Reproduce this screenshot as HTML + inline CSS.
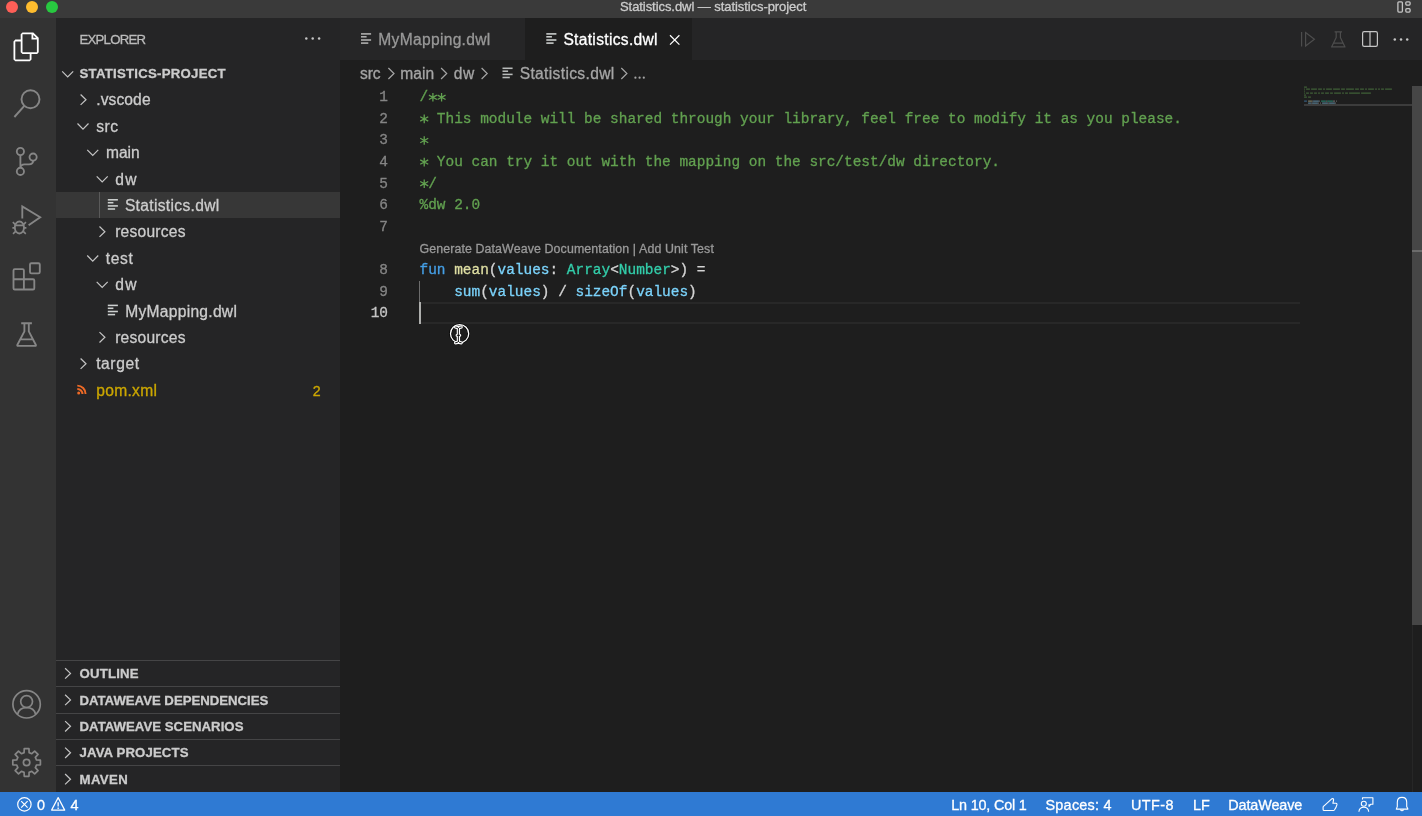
<!DOCTYPE html>
<html>
<head>
<meta charset="utf-8">
<title>Statistics.dwl — statistics-project</title>
<style>
*{box-sizing:border-box;margin:0;padding:0}
html,body{width:1422px;height:816px;overflow:hidden;background:#1e1e1e}
body{font-family:"Liberation Sans",sans-serif;position:relative;color:#ccc}
.abs{position:absolute}
.t{position:absolute;white-space:pre;line-height:1;-webkit-text-stroke:0.3px currentColor}
#titlebar{left:0;top:0;width:1422px;height:18px;background:#3a3a3a}
#activity{left:0;top:18px;width:56px;height:774px;background:#333333}
#sidebar{left:56px;top:18px;width:284px;height:774px;background:#252526}
#tabbar{left:340px;top:18px;width:1082px;height:42px;background:#252526}
#tab1{left:340px;top:18px;width:185px;height:42px;background:#262627}
#tab2{left:525px;top:18px;width:167px;height:42px;background:#1e1e1e}
#editor{left:340px;top:60px;width:1082px;height:732px;background:#1e1e1e}
#status{left:0;top:792px;width:1422px;height:24px;background:#2f7ad3}
#selrow{left:56px;top:192px;width:284px;height:26px;background:#373737}
.sep{position:absolute;left:56px;width:284px;height:1px;background:#454546}
#curline{left:419px;top:302px;width:881px;height:22px;border-top:2px solid #282828;border-bottom:2px solid #282828}
#cursor{left:419px;top:302.4px;width:2px;height:21.6px;background:#aeafad}
#guide{left:419px;top:281px;width:1px;height:21.4px;background:#6c6c6c}
#scroll{left:1412px;top:86px;width:10px;height:539px;background:#464646}
#strack{left:1412px;top:86px;width:1px;height:706px;background:#272727}
#scrollmark{left:1412px;top:250px;width:10px;height:2px;background:#6b6b6b}
#mmline{left:1304px;top:104px;width:108px;height:2px;background:#3c3c3c}
.dot{position:absolute;width:12px;height:12px;border-radius:50%;top:1px}
.code{font-family:"Liberation Mono",monospace;font-size:14.45px;color:#d4d4d4}
.ln{font-family:"Liberation Mono",monospace;font-size:14.45px;text-align:right;width:40px}
.c{color:#62a150}.k{color:#459fe6}.f{color:#dfdfa3}.v{color:#7bd3fb}.ty{color:#33cdaa}
#root{position:absolute;left:0;top:0;width:1422px;height:816px;will-change:transform}
#ov{position:absolute;left:0;top:0;width:1422px;height:816px}
</style>
</head>
<body>
<div id="root">
<div id="titlebar" class="abs"></div>
<div id="activity" class="abs"></div>
<div id="sidebar" class="abs"></div>
<div id="tabbar" class="abs"></div>
<div id="tab1" class="abs"></div>
<div id="tab2" class="abs"></div>
<div id="editor" class="abs"></div>
<div id="status" class="abs"></div>
<div id="selrow" class="abs"></div>
<div class="sep" style="top:660px"></div>
<div class="sep" style="top:686px"></div>
<div class="sep" style="top:712.5px"></div>
<div class="sep" style="top:739px"></div>
<div class="sep" style="top:765px"></div>
<div id="curline" class="abs"></div>
<div id="guide" class="abs"></div>
<div id="cursor" class="abs"></div>
<div id="strack" class="abs"></div>
<div id="scroll" class="abs"></div>
<div id="scrollmark" class="abs"></div>
<div id="mmline" class="abs"></div>

<div class="dot" style="left:6px;background:#fe5f57"></div>
<div class="dot" style="left:26px;background:#febc2e"></div>
<div class="dot" style="left:46px;background:#28c840"></div>
<div class="t" style="left:620.00px;top:-0.00px;font-size:13px;color:#cccccc;letter-spacing:-0.066px;">Statistics.dwl — statistics-project</div>

<div class="t" style="left:79.50px;top:32.73px;font-size:13.2px;color:#bbbbbb;letter-spacing:-0.756px;">EXPLORER</div>
<div class="t" style="left:79.50px;top:66.63px;font-size:13.2px;color:#cccccc;letter-spacing:0.259px;font-weight:bold;">STATISTICS-PROJECT</div>
<div class="t" style="left:96.20px;top:92.49px;font-size:15.6px;color:#cccccc;letter-spacing:0.106px;">.vscode</div>
<div class="t" style="left:96.20px;top:118.89px;font-size:15.6px;color:#cccccc;letter-spacing:0.502px;">src</div>
<div class="t" style="left:105.90px;top:145.29px;font-size:15.6px;color:#cccccc;letter-spacing:0.029px;">main</div>
<div class="t" style="left:115.20px;top:171.69px;font-size:15.6px;color:#cccccc;letter-spacing:1.458px;">dw</div>
<div class="t" style="left:124.90px;top:198.09px;font-size:15.6px;color:#cccccc;letter-spacing:0.326px;">Statistics.dwl</div>
<div class="t" style="left:115.20px;top:224.49px;font-size:15.6px;color:#cccccc;letter-spacing:0.225px;">resources</div>
<div class="t" style="left:105.80px;top:250.89px;font-size:15.6px;color:#cccccc;letter-spacing:0.652px;">test</div>
<div class="t" style="left:115.20px;top:277.29px;font-size:15.6px;color:#cccccc;letter-spacing:1.458px;">dw</div>
<div class="t" style="left:125.20px;top:303.69px;font-size:15.6px;color:#cccccc;letter-spacing:0.277px;">MyMapping.dwl</div>
<div class="t" style="left:115.20px;top:330.09px;font-size:15.6px;color:#cccccc;letter-spacing:0.225px;">resources</div>
<div class="t" style="left:96.20px;top:356.49px;font-size:15.6px;color:#cccccc;letter-spacing:0.582px;">target</div>
<div class="t" style="left:96.20px;top:382.89px;font-size:15.6px;color:#cca700;letter-spacing:0.309px;">pom.xml</div>
<div class="t" style="left:312.80px;top:383.78px;font-size:14.2px;color:#cca700;letter-spacing:0.202px;">2</div>
<div class="t" style="left:79.50px;top:666.73px;font-size:13.2px;color:#cccccc;letter-spacing:0.195px;font-weight:bold;">OUTLINE</div>
<div class="t" style="left:79.50px;top:693.53px;font-size:13.2px;color:#cccccc;letter-spacing:-0.011px;font-weight:bold;">DATAWEAVE DEPENDENCIES</div>
<div class="t" style="left:79.50px;top:719.93px;font-size:13.2px;color:#cccccc;letter-spacing:0.031px;font-weight:bold;">DATAWEAVE SCENARIOS</div>
<div class="t" style="left:79.50px;top:746.43px;font-size:13.2px;color:#cccccc;letter-spacing:0.126px;font-weight:bold;">JAVA PROJECTS</div>
<div class="t" style="left:79.50px;top:772.83px;font-size:13.2px;color:#cccccc;letter-spacing:0.402px;font-weight:bold;">MAVEN</div>

<div class="t" style="left:378.30px;top:32.29px;font-size:15.6px;color:#989898;letter-spacing:0.302px;">MyMapping.dwl</div>
<div class="t" style="left:563.40px;top:32.29px;font-size:15.6px;color:#ffffff;letter-spacing:0.311px;">Statistics.dwl</div>
<div class="t" style="left:359.90px;top:65.59px;font-size:15.6px;color:#a5a5a5;letter-spacing:-0.048px;">src</div>
<div class="t" style="left:400.30px;top:65.59px;font-size:15.6px;color:#a5a5a5;letter-spacing:0.062px;">main</div>
<div class="t" style="left:453.70px;top:65.59px;font-size:15.6px;color:#a5a5a5;letter-spacing:0.658px;">dw</div>
<div class="t" style="left:519.70px;top:65.59px;font-size:15.6px;color:#a5a5a5;letter-spacing:0.342px;">Statistics.dwl</div>

<div class="t ln" style="left:348px;top:90.16px;color:#858585">1</div>
<div class="t code" style="left:419.5px;top:90.16px"><span class="c">/  </span></div>
<div class="t ln" style="left:348px;top:111.76px;color:#858585">2</div>
<div class="t code" style="left:419.5px;top:111.76px"><span class="c">  This module will be shared through your library, feel free to modify it as you please.</span></div>
<div class="t ln" style="left:348px;top:133.36px;color:#858585">3</div>
<div class="t code" style="left:419.5px;top:133.36px"><span class="c"> </span></div>
<div class="t ln" style="left:348px;top:154.96px;color:#858585">4</div>
<div class="t code" style="left:419.5px;top:154.96px"><span class="c">  You can try it out with the mapping on the src/test/dw directory.</span></div>
<div class="t ln" style="left:348px;top:176.56px;color:#858585">5</div>
<div class="t code" style="left:419.5px;top:176.56px"><span class="c"> /</span></div>
<div class="t ln" style="left:348px;top:198.16px;color:#858585">6</div>
<div class="t code" style="left:419.5px;top:198.16px"><span class="c">%dw 2.0</span></div>
<div class="t ln" style="left:348px;top:219.76px;color:#858585">7</div>
<div class="t ln" style="left:348px;top:262.96px;color:#858585">8</div>
<div class="t code" style="left:419.5px;top:262.96px"><span class="k">fun</span> <span class="f">mean</span>(<span class="v">values</span>: <span class="ty">Array</span>&lt;<span class="ty">Number</span>&gt;) =</div>
<div class="t ln" style="left:348px;top:284.56px;color:#858585">9</div>
<div class="t code" style="left:419.5px;top:284.56px">    <span class="v">sum</span>(<span class="v">values</span>) / <span class="v">sizeOf</span>(<span class="v">values</span>)</div>
<div class="t ln" style="left:348px;top:306.16px;color:#c6c6c6">10</div>
<div class="t" style="left:419.40px;top:243.40px;font-size:12.4px;color:#999999;letter-spacing:0.110px;">Generate DataWeave Documentation | Add Unit Test</div>

<div class="t" style="left:37.00px;top:797.81px;font-size:14.4px;color:#ffffff;letter-spacing:0.591px;">0</div>
<div class="t" style="left:70.60px;top:797.81px;font-size:14.4px;color:#ffffff;letter-spacing:0.491px;">4</div>
<div class="t" style="left:951.30px;top:797.81px;font-size:14.4px;color:#ffffff;letter-spacing:-0.196px;">Ln 10, Col 1</div>
<div class="t" style="left:1045.50px;top:797.81px;font-size:14.4px;color:#ffffff;letter-spacing:0.257px;">Spaces: 4</div>
<div class="t" style="left:1130.90px;top:797.81px;font-size:14.4px;color:#ffffff;letter-spacing:0.476px;">UTF-8</div>
<div class="t" style="left:1193.00px;top:797.81px;font-size:14.4px;color:#ffffff;letter-spacing:0.095px;">LF</div>
<div class="t" style="left:1228.20px;top:797.81px;font-size:14.4px;color:#ffffff;letter-spacing:-0.097px;">DataWeave</div>

<svg id="ov" viewBox="0 0 1422 816" fill="none" stroke-linecap="butt" stroke-linejoin="miter">
<path d="M62.20,71.30 L67.70,76.90 L73.20,71.30" stroke="#c5c5c5" stroke-width="1.2"/>
<path d="M80.60,94.50 L86.00,99.70 L80.60,104.90" stroke="#c5c5c5" stroke-width="1.2"/>
<path d="M77.50,123.50 L83.00,129.10 L88.50,123.50" stroke="#c5c5c5" stroke-width="1.2"/>
<path d="M87.25,149.90 L92.75,155.50 L98.25,149.90" stroke="#c5c5c5" stroke-width="1.2"/>
<path d="M96.70,176.30 L102.20,181.90 L107.70,176.30" stroke="#c5c5c5" stroke-width="1.2"/>
<rect x="107.80" y="199.02" width="10.1" height="1.56" fill="#cdd0cf"/>
<rect x="107.80" y="201.92" width="5.6" height="1.56" fill="#cdd0cf"/>
<rect x="107.80" y="205.12" width="10.1" height="1.56" fill="#cdd0cf"/>
<rect x="107.80" y="208.22" width="7.3" height="1.56" fill="#cdd0cf"/>
<path d="M99.50,226.50 L104.90,231.70 L99.50,236.90" stroke="#c5c5c5" stroke-width="1.2"/>
<path d="M87.25,255.50 L92.75,261.10 L98.25,255.50" stroke="#c5c5c5" stroke-width="1.2"/>
<path d="M96.70,281.90 L102.20,287.50 L107.70,281.90" stroke="#c5c5c5" stroke-width="1.2"/>
<rect x="107.80" y="304.62" width="10.1" height="1.56" fill="#cdd0cf"/>
<rect x="107.80" y="307.52" width="5.6" height="1.56" fill="#cdd0cf"/>
<rect x="107.80" y="310.72" width="10.1" height="1.56" fill="#cdd0cf"/>
<rect x="107.80" y="313.82" width="7.3" height="1.56" fill="#cdd0cf"/>
<path d="M99.50,332.10 L104.90,337.30 L99.50,342.50" stroke="#c5c5c5" stroke-width="1.2"/>
<path d="M80.60,358.50 L86.00,363.70 L80.60,368.90" stroke="#c5c5c5" stroke-width="1.2"/>
<rect x="99" y="192" width="1" height="26" fill="#5a5a5a"/>
<circle cx="78.7" cy="393.0" r="1.5" fill="#ee6a26"/>
<path d="M77.3,388.9 A5.2,5.2 0 0 1 82.5,394.1" stroke="#ee6a26" stroke-width="2.0"/>
<path d="M77.3,385.6 A8.3,8.3 0 0 1 85.6,393.9" stroke="#ee6a26" stroke-width="1.9"/>
<path d="M65.10,668.20 L70.50,673.40 L65.10,678.60" stroke="#c5c5c5" stroke-width="1.2"/>
<path d="M65.10,694.70 L70.50,699.90 L65.10,705.10" stroke="#c5c5c5" stroke-width="1.2"/>
<path d="M65.10,721.10 L70.50,726.30 L65.10,731.50" stroke="#c5c5c5" stroke-width="1.2"/>
<path d="M65.10,747.60 L70.50,752.80 L65.10,758.00" stroke="#c5c5c5" stroke-width="1.2"/>
<path d="M65.10,774.00 L70.50,779.20 L65.10,784.40" stroke="#c5c5c5" stroke-width="1.2"/>
<circle cx="306.3" cy="38.4" r="1.25" fill="#c5c5c5"/>
<circle cx="312.7" cy="38.4" r="1.25" fill="#c5c5c5"/>
<circle cx="319.1" cy="38.4" r="1.25" fill="#c5c5c5"/>
<rect x="361.00" y="33.12" width="10.1" height="1.56" fill="#b0b0b0"/>
<rect x="361.00" y="36.02" width="5.6" height="1.56" fill="#b0b0b0"/>
<rect x="361.00" y="39.22" width="10.1" height="1.56" fill="#b0b0b0"/>
<rect x="361.00" y="42.32" width="7.3" height="1.56" fill="#b0b0b0"/>
<rect x="546.30" y="33.12" width="10.1" height="1.56" fill="#cdd0cf"/>
<rect x="546.30" y="36.02" width="5.6" height="1.56" fill="#cdd0cf"/>
<rect x="546.30" y="39.22" width="10.1" height="1.56" fill="#cdd0cf"/>
<rect x="546.30" y="42.32" width="7.3" height="1.56" fill="#cdd0cf"/>
<path d="M670.0,35.3 L679.4,44.6 M679.4,35.3 L670.0,44.6" stroke="#ffffff" stroke-width="1.2"/>
<path d="M388.40,68.00 L394.00,73.50 L388.40,79.00" stroke="#a5a5a5" stroke-width="1.2"/>
<path d="M441.10,68.00 L446.70,73.50 L441.10,79.00" stroke="#a5a5a5" stroke-width="1.2"/>
<path d="M481.60,68.00 L487.20,73.50 L481.60,79.00" stroke="#a5a5a5" stroke-width="1.2"/>
<path d="M621.30,68.00 L626.90,73.50 L621.30,79.00" stroke="#a5a5a5" stroke-width="1.2"/>
<rect x="502.50" y="67.52" width="10.1" height="1.56" fill="#b8bbba"/>
<rect x="502.50" y="70.42" width="5.6" height="1.56" fill="#b8bbba"/>
<rect x="502.50" y="73.62" width="10.1" height="1.56" fill="#b8bbba"/>
<rect x="502.50" y="76.72" width="7.3" height="1.56" fill="#b8bbba"/>
<circle cx="635.4" cy="77.7" r="1.1" fill="#a5a5a5"/>
<circle cx="639.6" cy="77.7" r="1.1" fill="#a5a5a5"/>
<circle cx="643.8" cy="77.7" r="1.1" fill="#a5a5a5"/>
<path d="M1301.6,32 V46.6" stroke="#4d4d4d" stroke-width="1.2"/>
<path d="M1305.6,32.6 L1314.4,39.3 L1305.6,46 Z" stroke="#4d4d4d" stroke-width="1.2"/>
<path d="M1334.6,31.8 H1342 M1336.2,31.8 V37.6 L1331.6,46.9 H1345 L1340.4,37.6 V31.8 M1333.4,43.2 H1343.2" stroke="#4d4d4d" stroke-width="1.2" stroke-linejoin="round"/>
<rect x="1362.6" y="31.7" width="14.8" height="14.6" rx="1.6" stroke="#c5c5c5" stroke-width="1.2"/>
<path d="M1370,31.7 V46.3" stroke="#c5c5c5" stroke-width="1.2"/>
<circle cx="1394.8" cy="39.4" r="1.25" fill="#c5c5c5"/>
<circle cx="1401.0" cy="39.4" r="1.25" fill="#c5c5c5"/>
<circle cx="1407.2" cy="39.4" r="1.25" fill="#c5c5c5"/>
<rect x="1397.9" y="1.8" width="4.5" height="10.3" rx="1.0" stroke="#c5c5c5" stroke-width="1.3"/>
<rect x="1405.8" y="1.8" width="4.3" height="3.3" rx="1.0" stroke="#c5c5c5" stroke-width="1.3"/>
<rect x="1405.8" y="8.7" width="4.3" height="3.4" rx="1.0" stroke="#c5c5c5" stroke-width="1.3"/>
<rect x="1304.1" y="86.5" width="2.8" height="1.25" fill="#62a150" opacity="0.5"/>
<rect x="1304.1" y="88.5" width="0.8" height="1.25" fill="#62a150" opacity="0.5"/>
<rect x="1306.1" y="88.5" width="3.8" height="1.25" fill="#62a150" opacity="0.5"/>
<rect x="1311.1" y="88.5" width="5.8" height="1.25" fill="#62a150" opacity="0.5"/>
<rect x="1318.1" y="88.5" width="3.8" height="1.25" fill="#62a150" opacity="0.5"/>
<rect x="1323.1" y="88.5" width="1.8" height="1.25" fill="#62a150" opacity="0.5"/>
<rect x="1326.1" y="88.5" width="5.8" height="1.25" fill="#62a150" opacity="0.5"/>
<rect x="1333.1" y="88.5" width="6.8" height="1.25" fill="#62a150" opacity="0.5"/>
<rect x="1341.1" y="88.5" width="3.8" height="1.25" fill="#62a150" opacity="0.5"/>
<rect x="1346.1" y="88.5" width="7.8" height="1.25" fill="#62a150" opacity="0.5"/>
<rect x="1355.1" y="88.5" width="3.8" height="1.25" fill="#62a150" opacity="0.5"/>
<rect x="1360.1" y="88.5" width="3.8" height="1.25" fill="#62a150" opacity="0.5"/>
<rect x="1365.1" y="88.5" width="1.8" height="1.25" fill="#62a150" opacity="0.5"/>
<rect x="1368.1" y="88.5" width="5.8" height="1.25" fill="#62a150" opacity="0.5"/>
<rect x="1375.1" y="88.5" width="1.8" height="1.25" fill="#62a150" opacity="0.5"/>
<rect x="1378.1" y="88.5" width="1.8" height="1.25" fill="#62a150" opacity="0.5"/>
<rect x="1381.1" y="88.5" width="2.8" height="1.25" fill="#62a150" opacity="0.5"/>
<rect x="1385.1" y="88.5" width="6.8" height="1.25" fill="#62a150" opacity="0.5"/>
<rect x="1304.1" y="90.5" width="0.8" height="1.25" fill="#62a150" opacity="0.5"/>
<rect x="1304.1" y="92.5" width="0.8" height="1.25" fill="#62a150" opacity="0.5"/>
<rect x="1306.1" y="92.5" width="2.8" height="1.25" fill="#62a150" opacity="0.5"/>
<rect x="1310.1" y="92.5" width="2.8" height="1.25" fill="#62a150" opacity="0.5"/>
<rect x="1314.1" y="92.5" width="2.8" height="1.25" fill="#62a150" opacity="0.5"/>
<rect x="1318.1" y="92.5" width="1.8" height="1.25" fill="#62a150" opacity="0.5"/>
<rect x="1321.1" y="92.5" width="2.8" height="1.25" fill="#62a150" opacity="0.5"/>
<rect x="1325.1" y="92.5" width="3.8" height="1.25" fill="#62a150" opacity="0.5"/>
<rect x="1330.1" y="92.5" width="2.8" height="1.25" fill="#62a150" opacity="0.5"/>
<rect x="1334.1" y="92.5" width="6.8" height="1.25" fill="#62a150" opacity="0.5"/>
<rect x="1342.1" y="92.5" width="1.8" height="1.25" fill="#62a150" opacity="0.5"/>
<rect x="1345.1" y="92.5" width="2.8" height="1.25" fill="#62a150" opacity="0.5"/>
<rect x="1349.1" y="92.5" width="10.8" height="1.25" fill="#62a150" opacity="0.5"/>
<rect x="1361.1" y="92.5" width="9.8" height="1.25" fill="#62a150" opacity="0.5"/>
<rect x="1304.1" y="94.5" width="1.8" height="1.25" fill="#62a150" opacity="0.5"/>
<rect x="1304.1" y="96.5" width="2.8" height="1.25" fill="#62a150" opacity="0.5"/>
<rect x="1308.1" y="96.5" width="2.8" height="1.25" fill="#62a150" opacity="0.5"/>
<rect x="1304.1" y="100.5" width="2.8" height="1.25" fill="#4e9de0" opacity="0.5"/>
<rect x="1308.1" y="100.5" width="3.8" height="1.25" fill="#dcdcaa" opacity="0.5"/>
<rect x="1312.1" y="100.5" width="0.8" height="1.25" fill="#bbbbbb" opacity="0.5"/>
<rect x="1313.1" y="100.5" width="5.8" height="1.25" fill="#8fd6fb" opacity="0.5"/>
<rect x="1319.1" y="100.5" width="0.8" height="1.25" fill="#bbbbbb" opacity="0.5"/>
<rect x="1321.1" y="100.5" width="4.8" height="1.25" fill="#33cdaa" opacity="0.5"/>
<rect x="1326.1" y="100.5" width="0.8" height="1.25" fill="#bbbbbb" opacity="0.5"/>
<rect x="1327.1" y="100.5" width="5.8" height="1.25" fill="#33cdaa" opacity="0.5"/>
<rect x="1333.1" y="100.5" width="1.8" height="1.25" fill="#bbbbbb" opacity="0.5"/>
<rect x="1336.1" y="100.5" width="0.8" height="1.25" fill="#bbbbbb" opacity="0.5"/>
<rect x="1308.1" y="102.5" width="2.8" height="1.25" fill="#8fd6fb" opacity="0.5"/>
<rect x="1311.1" y="102.5" width="0.8" height="1.25" fill="#bbbbbb" opacity="0.5"/>
<rect x="1312.1" y="102.5" width="5.8" height="1.25" fill="#8fd6fb" opacity="0.5"/>
<rect x="1318.1" y="102.5" width="0.8" height="1.25" fill="#bbbbbb" opacity="0.5"/>
<rect x="1320.1" y="102.5" width="0.8" height="1.25" fill="#bbbbbb" opacity="0.5"/>
<rect x="1322.1" y="102.5" width="5.8" height="1.25" fill="#8fd6fb" opacity="0.5"/>
<rect x="1328.1" y="102.5" width="0.8" height="1.25" fill="#bbbbbb" opacity="0.5"/>
<rect x="1329.1" y="102.5" width="5.8" height="1.25" fill="#8fd6fb" opacity="0.5"/>
<rect x="1335.1" y="102.5" width="0.8" height="1.25" fill="#bbbbbb" opacity="0.5"/>
<circle cx="24.4" cy="804.4" r="6.7" stroke="#fff" stroke-width="1.2"/>
<path d="M21.2,801.2 L27.6,807.6 M27.6,801.2 L21.2,807.6" stroke="#fff" stroke-width="1.2"/>
<path d="M58.15,797.6 L64.7,810.1 H51.6 Z" stroke="#fff" stroke-width="1.2" stroke-linejoin="round"/>
<path d="M58.15,802.2 V806.6 M58.15,807.6 V808.9" stroke="#fff" stroke-width="1.3"/>
<path d="M1323.1,807.2 Q1323.1,806.5 1323.8,806.1 L1332.0,798.7 Q1333.5,798.2 1333.6,799.8 L1332.9,803.3 H1336.0 Q1337.2,803.5 1336.9,804.9 Q1336.2,807.6 1334.4,810.0 Q1334.0,810.5 1333.4,810.5 H1324.1 Q1323.1,810.5 1323.1,809.5 Z" stroke="#fff" stroke-width="1.1" stroke-linejoin="round"/>
<circle cx="1363.8" cy="803.8" r="2.5" stroke="#fff" stroke-width="1.1"/>
<path d="M1358.9,811.8 Q1359.3,807.2 1363.8,807.2 Q1368.3,807.2 1368.7,811.8" stroke="#fff" stroke-width="1.1"/>
<path d="M1362.5,799.6 V797.8 H1372.9 V804.3 H1370.6 L1369.0,806.4 V804.3" stroke="#fff" stroke-width="1.1" stroke-linejoin="round"/>
<path d="M1396.3,809.1 H1407.9 L1406.7,806.6 V802.2 Q1406.7,797.4 1402.0,797.4 Q1397.3,797.4 1397.3,802.2 V806.6 Z" stroke="#fff" stroke-width="1.1" stroke-linejoin="round"/>
<path d="M1400.4,809.6 Q1402.0,812.0 1403.6,809.6" stroke="#fff" stroke-width="1.1"/>
<circle cx="459.6" cy="333.7" r="9.1" stroke="#000" stroke-width="2.8" opacity="0.85"/>
<circle cx="459.6" cy="333.7" r="9.1" stroke="#fff" stroke-width="1.3"/>
<path d="M455.6,327 Q457.6,327 458.4,328.4 Q459.2,327 461.2,327 M458.4,328.4 V341.4 M455.6,342.8 Q457.6,342.8 458.4,341.4 Q459.2,342.8 461.2,342.8 M457.2,335.3 H459.6" stroke="#fff" stroke-width="3.3" stroke-linecap="round" stroke-linejoin="round"/>
<path d="M455.6,327 Q457.6,327 458.4,328.4 Q459.2,327 461.2,327 M458.4,328.4 V341.4 M455.6,342.8 Q457.6,342.8 458.4,341.4 Q459.2,342.8 461.2,342.8 M457.2,335.3 H459.6" stroke="#000" stroke-width="0.9" stroke-linecap="round"/>
<path transform="translate(12.3,32.4) scale(1.2)" fill="#ffffff" stroke="none" fill-rule="evenodd" d="M17.5 0h-9L7 1.5V6H2.5L1 7.5v15.07L2.5 24h12.07L16 22.57V18h4.7l1.3-1.43V4.5L17.5 0zm0 2.12l2.38 2.38H17.5V2.12zm-3 20.38h-12v-15H7v9.07L8.5 18h6v4.5zm6-6h-12v-15H16V6h4.5v10.5z"/>
<circle cx="30.5" cy="99.3" r="9.0" stroke="#868686" stroke-width="1.9"/>
<path d="M24.3,105.9 L14.4,117.0" stroke="#868686" stroke-width="1.9"/>
<circle cx="20.4" cy="151.5" r="3.6" stroke="#868686" stroke-width="1.85"/>
<circle cx="33.1" cy="157.1" r="3.6" stroke="#868686" stroke-width="1.85"/>
<circle cx="20.4" cy="171.4" r="3.6" stroke="#868686" stroke-width="1.85"/>
<path d="M20.4,155.1 V167.8 M33.1,160.7 Q33.1,164.2 29.0,164.4 L24.6,164.4 Q20.6,164.6 20.4,167.8" stroke="#868686" stroke-width="1.85"/>
<path d="M22.3,218.6 V206.4 L40.2,217.3 L28.6,225.2" stroke="#868686" stroke-width="1.85"/>
<ellipse cx="19.4" cy="227.5" rx="4.6" ry="6.0" stroke="#868686" stroke-width="1.85"/>
<path d="M15.2,225.4 H23.6 M15,227.9 H12.4 M23.8,227.9 H26.4 M15.4,224.6 L12.8,222.2 M23.4,224.6 L26.0,222.2 M15.6,231.4 L13,233.8 M23.2,231.4 L25.8,233.8" stroke="#868686" stroke-width="1.6"/>
<rect x="30.0" y="263.2" width="9.8" height="10.2" rx="1.4" stroke="#868686" stroke-width="1.85"/>
<path d="M23.9,279.2 V270.4 Q23.9,269.1 22.6,269.1 H14.8 Q13.5,269.1 13.5,270.4 V288.2 Q13.5,289.5 14.8,289.5 H33.0 Q34.3,289.5 34.3,288.2 V280.5 Q34.3,279.2 33.0,279.2 H13.5 M23.9,279.2 V289.5" stroke="#868686" stroke-width="1.85"/>
<path d="M21.2,323.2 H31.9 M24.4,323.2 V331.4 L17.3,345.0 Q17.0,345.9 18.0,345.9 H35.2 Q36.2,345.9 35.9,345.0 L28.8,331.4 V323.2 M20.4,339.4 H32.8" stroke="#868686" stroke-width="1.85" stroke-linejoin="round"/>
<circle cx="26.6" cy="704.3" r="13.7" stroke="#868686" stroke-width="1.7"/>
<circle cx="26.6" cy="701.6" r="5.9" stroke="#868686" stroke-width="1.7"/>
<path d="M17.6,714.2 Q19.2,707.6 26.6,707.6 Q34.0,707.6 35.6,714.2" stroke="#868686" stroke-width="1.7"/>
<path d="M24.08,752.62 L24.23,748.70 L28.97,748.70 L29.12,752.62 L31.80,753.73 L34.68,751.07 L38.03,754.42 L35.37,757.30 L36.48,759.98 L40.40,760.13 L40.40,764.87 L36.48,765.02 L35.37,767.70 L38.03,770.58 L34.68,773.93 L31.80,771.27 L29.12,772.38 L28.97,776.30 L24.23,776.30 L24.08,772.38 L21.40,771.27 L18.52,773.93 L15.17,770.58 L17.83,767.70 L16.72,765.02 L12.80,764.87 L12.80,760.13 L16.72,759.98 L17.83,757.30 L15.17,754.42 L18.52,751.07 L21.40,753.73 Z" stroke="#868686" stroke-width="1.7" stroke-linejoin="round"/>
<circle cx="26.6" cy="762.5" r="3.2" stroke="#868686" stroke-width="1.7"/>
<path d="M432.90,93.00 V101.60 M428.90,95.10 L436.90,99.50 M428.90,99.50 L436.90,95.10" stroke="#62a150" stroke-width="1.3"/>
<path d="M441.57,93.00 V101.60 M437.57,95.10 L445.57,99.50 M437.57,99.50 L445.57,95.10" stroke="#62a150" stroke-width="1.3"/>
<path d="M424.23,114.60 V123.20 M420.23,116.70 L428.23,121.10 M420.23,121.10 L428.23,116.70" stroke="#62a150" stroke-width="1.3"/>
<path d="M424.23,136.20 V144.80 M420.23,138.30 L428.23,142.70 M420.23,142.70 L428.23,138.30" stroke="#62a150" stroke-width="1.3"/>
<path d="M424.23,157.80 V166.40 M420.23,159.90 L428.23,164.30 M420.23,164.30 L428.23,159.90" stroke="#62a150" stroke-width="1.3"/>
<path d="M424.23,179.40 V188.00 M420.23,181.50 L428.23,185.90 M420.23,185.90 L428.23,181.50" stroke="#62a150" stroke-width="1.3"/>
</svg>
</div>
</body>
</html>
